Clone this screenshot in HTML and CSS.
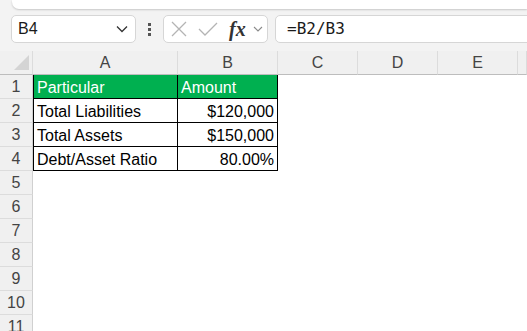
FILE: index.html
```html
<!DOCTYPE html>
<html lang="en">
<head>
  <meta charset="UTF-8">
  <title>Debt to Asset Ratio</title>
  <link rel="stylesheet" href="styles.css">
</head>
<body>
  <div class="topbar"></div>
  <div class="formula-row">
    <div class="name-box">
      <span>B4</span>
      <svg class="chev" width="12" height="8" viewBox="0 0 12 8"><path d="M1 1.5 L6 6.5 L11 1.5" fill="none" stroke="#333" stroke-width="1.3"/></svg>
    </div>
    <div class="more"><span></span><span></span><span></span></div>
    <div class="fx-buttons">
      <svg width="16" height="16" viewBox="0 0 16 16"><path d="M1 1 L15 15 M15 1 L1 15" stroke="#b4b4b4" stroke-width="1.3"/></svg>
      <svg width="20" height="16" viewBox="0 0 20 16"><path d="M1 8 L7 14 L19 2" fill="none" stroke="#b4b4b4" stroke-width="1.3"/></svg>
      <span class="fx">fx</span>
      <svg width="10" height="6" viewBox="0 0 10 6"><path d="M1 1 L5 5 L9 1" fill="none" stroke="#8a8a8a" stroke-width="1.1"/></svg>
    </div>
    <div class="formula-box">=B2/B3</div>
  </div>

  <div class="sheet">
    <div class="corner"><span class="triangle"></span></div>
    <div class="col-head">A</div>
    <div class="col-head">B</div>
    <div class="col-head">C</div>
    <div class="col-head">D</div>
    <div class="col-head">E</div>
    <div class="col-head"></div>

    <div class="data">
      <div class="cell head first">Particular</div>
      <div class="cell head">Amount</div>
      <div class="cell first">Total Liabilities</div>
      <div class="cell num">$120,000</div>
      <div class="cell first">Total Assets</div>
      <div class="cell num">$150,000</div>
      <div class="cell first">Debt/Asset Ratio</div>
      <div class="cell num">80.00%</div>
    </div>

    <div class="row-head">1</div>
    <div class="row-head">2</div>
    <div class="row-head">3</div>
    <div class="row-head">4</div>
    <div class="row-head">5</div>
    <div class="row-head">6</div>
    <div class="row-head">7</div>
    <div class="row-head">8</div>
    <div class="row-head">9</div>
    <div class="row-head">10</div>
    <div class="row-head">11</div>
  </div>
</body>
</html>
```

FILE: styles.css
```css
body {
  margin: 0;
  background-color: #f3f3f3;
  font-family: "Liberation Sans", Arial, sans-serif;
  overflow: hidden;
}

.topbar {
  height: 9px;
  margin-left: 12px;
  background-color: #fff;
  border-bottom-left-radius: 7px;
  box-shadow: 0 1px 2px rgba(0, 0, 0, 0.18);
}

.formula-row {
  display: flex;
  align-items: center;
  height: 28px;
  padding: 6px 0 8px 11px;
}

.name-box {
  display: flex;
  align-items: center;
  justify-content: space-between;
  box-sizing: border-box;
  width: 125px;
  height: 28px;
  padding: 0 7px 0 6px;
  background-color: #fff;
  border: 1px solid #d6d6d6;
  border-radius: 5px;
  font-size: 16px;
  color: #1a1a1a;
}

.more {
  display: flex;
  flex-direction: column;
  gap: 2px;
  width: 3px;
  margin: 0 12px 0 12px;
}

.more span {
  width: 3px;
  height: 3px;
  background-color: #555;
}

.fx-buttons {
  display: flex;
  align-items: center;
  box-sizing: border-box;
  width: 105px;
  height: 28px;
  padding: 0 0 0 7px;
  background-color: #fff;
  border: 1px solid #d6d6d6;
  border-radius: 5px;
  gap: 11px;
}

.fx-buttons .fx {
  font-family: "Liberation Serif", "Times New Roman", serif;
  font-style: italic;
  font-weight: bold;
  font-size: 20px;
  color: #333;
  margin: 0 -4px 0 0;
}

.formula-box {
  flex: 1;
  box-sizing: border-box;
  height: 28px;
  margin-left: 7px;
  margin-right: -8px;
  padding: 0 0 0 11px;
  background-color: #fff;
  border: 1px solid #d6d6d6;
  border-radius: 5px;
  font-family: "DejaVu Sans Mono", monospace;
  font-size: 16px;
  line-height: 26px;
  color: #1a1a1a;
}

/* Sheet grid */
.sheet {
  display: grid;
  grid-template-columns: 33px 145px 100px 80px 80px 80px 1fr;
  grid-auto-rows: 24px;
  background-color: #fff;
}

.corner,
.col-head,
.row-head {
  box-sizing: border-box;
  background-color: #f0f0f0;
  font-size: 16px;
  color: #444;
  display: flex;
  align-items: center;
  justify-content: center;
}

.corner {
  align-items: flex-end;
  justify-content: flex-end;
  padding: 0 3px 4px 0;
  border-right: 1px solid #dcdcdc;
  border-bottom: 1px solid #bdbdbd;
}

.triangle {
  width: 15px;
  height: 15px;
  background-color: #d4d4d4;
  clip-path: polygon(100% 0, 100% 100%, 0 100%);
}

.col-head {
  border-right: 1px solid #dcdcdc;
  border-bottom: 1px solid #bdbdbd;
}

.row-head {
  grid-column: 1;
  border-right: 1px solid #d0d0d0;
  border-bottom: 1px solid #dcdcdc;
}

.data {
  grid-column: 2 / 4;
  grid-row: 2 / 6;
  display: grid;
  grid-template-columns: 145px 100px;
  grid-auto-rows: 24px;
}

.cell {
  box-sizing: border-box;
  padding: 2px 3px 0 3px;
  font-size: 16px;
  line-height: 22px;
  color: #000;
  border-right: 1px solid #000;
  border-bottom: 1px solid #000;
  white-space: nowrap;
}

.cell.first {
  border-left: 1px solid #000;
}

.cell.head {
  background-color: #00b050;
  color: #fff;
}

.cell.num {
  text-align: right;
}
```
